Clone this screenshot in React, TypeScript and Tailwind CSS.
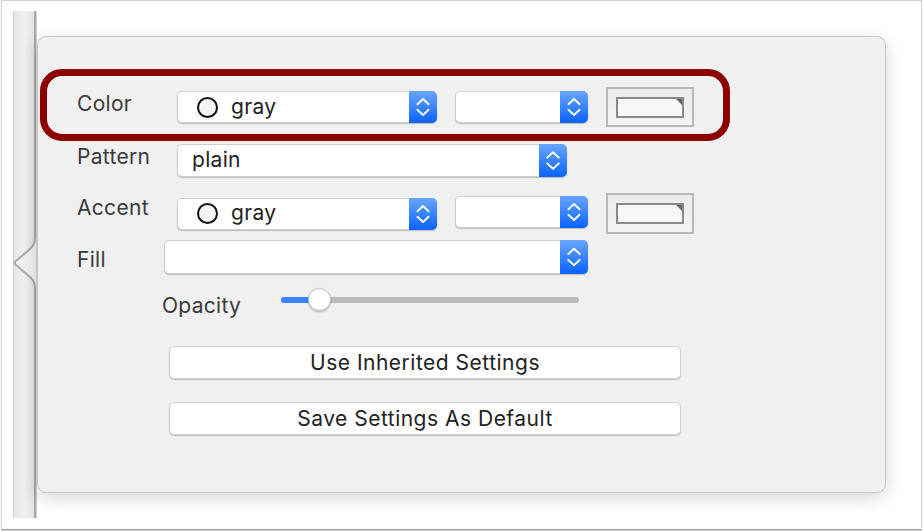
import React from "react";

const font = { fontFamily: "Inter, 'Noto Sans', sans-serif" };

function Chevrons() {
  return (
    <svg width="29" height="100%" viewBox="0 0 29 32" preserveAspectRatio="xMidYMid meet" className="h-full w-full">
      <path d="M8.5 13 L14.5 7.5 L20.5 13" fill="none" stroke="white" strokeWidth="2" strokeLinecap="round" strokeLinejoin="round" />
      <path d="M8.5 19 L14.5 24.5 L20.5 19" fill="none" stroke="white" strokeWidth="2" strokeLinecap="round" strokeLinejoin="round" />
    </svg>
  );
}

function Popup({ w, h, children, extra = "" }: { w: string; h: string; children?: React.ReactNode; extra?: string }) {
  return (
    <div className={`flex ${w} ${h} ${extra} rounded-[5px] bg-white border border-[#cfcfcf] shadow-[0_1px_1px_rgba(0,0,0,0.22)]`}>
      <div className="flex flex-1 items-center min-w-0">{children}</div>
      <div className="w-[28px] h-full -my-px -mr-px rounded-r-[5px] bg-[linear-gradient(#69a5fd,#0a63ff)] flex items-center justify-center box-content py-px">
        <Chevrons />
      </div>
    </div>
  );
}

function ColorValue() {
  return (
    <div className="flex items-center pl-[19px]">
      <div className="w-[21px] h-[21px] rounded-full border-2 border-[#111] bg-[#f4f5f7]" />
      <span className="ml-[13px] text-[21px] tracking-[0.3px] text-[#222] leading-none pb-[2px]">gray</span>
    </div>
  );
}

function Swatch({ h }: { h: string }) {
  return (
    <div className={`ml-[18px] w-[88px] ${h} border-2 border-[#b7b7b7] bg-[linear-gradient(#ececec,#f3f3f3)] flex items-center justify-center`}>
      <div className="relative w-[68px] h-[21px] border-2 border-[#8a8a8a] bg-[#f6f7f9]">
        <svg className="absolute right-0 top-0" width="6" height="6" viewBox="0 0 6 6">
          <path d="M0 0 H6 V6 Z" fill="#6a6a6a" />
        </svg>
      </div>
    </div>
  );
}

const label = "text-[21px] tracking-[0.3px] leading-none";
const btn =
  "ml-[131px] w-[512px] h-[33px] rounded-[5px] bg-white border border-[#d0d0d0] shadow-[0_1px_1px_rgba(0,0,0,0.2)] flex items-center justify-center text-[21px] tracking-[0.5px] text-[#222] leading-none";

export default function App() {
  return (
    <div className="w-[924px] h-[532px] bg-white" style={font}>
      <div className="ml-[1px] w-[921px] h-[530px] border border-[#d6d6d6] border-b-[#9a9a9a] shadow-[0_1px_1px_rgba(0,0,0,0.15)] flex bg-white">
        {/* left edge strip with arrow */}
        <div className="w-[35px] pt-[10px] shrink-0">
          <svg width="35" height="507" viewBox="0 0 35 507">
            <defs>
              <linearGradient id="strip" x1="0" x2="1" y1="0" y2="0">
                <stop offset="0" stopColor="#e7e7e7" />
                <stop offset="0.5" stopColor="#f0f0f0" />
                <stop offset="1" stopColor="#e2e2e2" />
              </linearGradient>
            </defs>
            <rect x="11" y="0" width="1" height="507" fill="#cfcfcf" />
            <rect x="12" y="0" width="21" height="507" fill="url(#strip)" />
            <path
              d="M35 224 L33 226 C33 233 31 235 28 238 L13.5 250.5 Q12 252 13.5 253.5 L28 266 C31 269 33 271 33 278 L35 280 Z"
              fill="#f1f1f1"
            />
            <path
              d="M33 0 V226 C33 233 31 235 28 238 L13.5 250.5 Q12 252 13.5 253.5 L28 266 C31 269 33 271 33 278 V507"
              fill="none"
              stroke="#a9a9a9"
              strokeWidth="2"
            />
            <rect x="34" y="0" width="1" height="507" fill="#d4d4d4" />
          </svg>
        </div>

        {/* popover */}
        <div className="pt-[35px] pl-0">
          <div className="relative w-[849px] h-[457px] rounded-[9px] border border-[#c7c7c7] bg-[#f0f0f0] shadow-[0_5px_18px_rgba(0,0,0,0.16)] pt-[50px] text-[#3a3a3a]">
            {/* Row: Color */}
            <div className="flex items-center h-[40px] pl-[39px]">
              <div className={`w-[100px] ${label} mb-[7px]`}>Color</div>
              <Popup w="w-[260px]" h="h-[32px]">
                <ColorValue />
              </Popup>
              <Popup w="w-[133px]" h="h-[32px]" extra="ml-[18px]" />
              <Swatch h="h-[40px]" />
            </div>

            {/* Row: Pattern */}
            <div className="flex items-center h-[33px] mt-[17px] pl-[39px]">
              <div className={`w-[100px] ${label} mb-[9px]`}>Pattern</div>
              <Popup w="w-[390px]" h="h-[33px]">
                <span className="pl-[14px] text-[21px] tracking-[0.3px] text-[#222] leading-none pb-[2px]">plain</span>
              </Popup>
            </div>

            {/* Row: Accent */}
            <div className="flex items-center h-[41px] mt-[16px] pl-[39px]">
              <div className={`w-[100px] ${label} mb-[13px]`}>Accent</div>
              <Popup w="w-[260px]" h="h-[32px]">
                <ColorValue />
              </Popup>
              <Popup w="w-[133px]" h="h-[32px]" extra="ml-[18px] mb-[4px]" />
              <Swatch h="h-[41px]" />
            </div>

            {/* Row: Fill */}
            <div className="flex items-center h-[34px] mt-[6px] pl-[39px]">
              <div className={`w-[87px] ${label} mt-[4px]`}>Fill</div>
              <Popup w="w-[424px]" h="h-[34px]" />
            </div>

            {/* Row: Opacity */}
            <div className="flex items-center h-[26px] mt-[13px] pl-[124px]">
              <div className={`w-[119px] ${label} mt-[10px]`}>Opacity</div>
              <div className="relative w-[298px] h-[26px] flex items-center">
                <div className="w-full h-[6px] rounded-full bg-[#bababa] flex">
                  <div className="w-[40px] h-full rounded-full bg-[#3a86f8]" />
                </div>
                <div className="absolute left-[27px] top-[1px] w-[23px] h-[23px] rounded-full bg-white border border-[#c4c4c4] shadow-[0_1px_2px_rgba(0,0,0,0.25)]" />
              </div>
            </div>

            {/* Buttons */}
            <div className={`mt-[33px] ${btn}`}>Use Inherited Settings</div>
            <div className={`mt-[23px] ${btn}`}>Save Settings As Default</div>

            {/* highlight annotation */}
            <div className="absolute left-[2px] top-[32px] w-[690px] h-[72px] border-[7px] border-[#8d0000] rounded-[22px] pointer-events-none" />
          </div>
        </div>
      </div>
    </div>
  );
}
